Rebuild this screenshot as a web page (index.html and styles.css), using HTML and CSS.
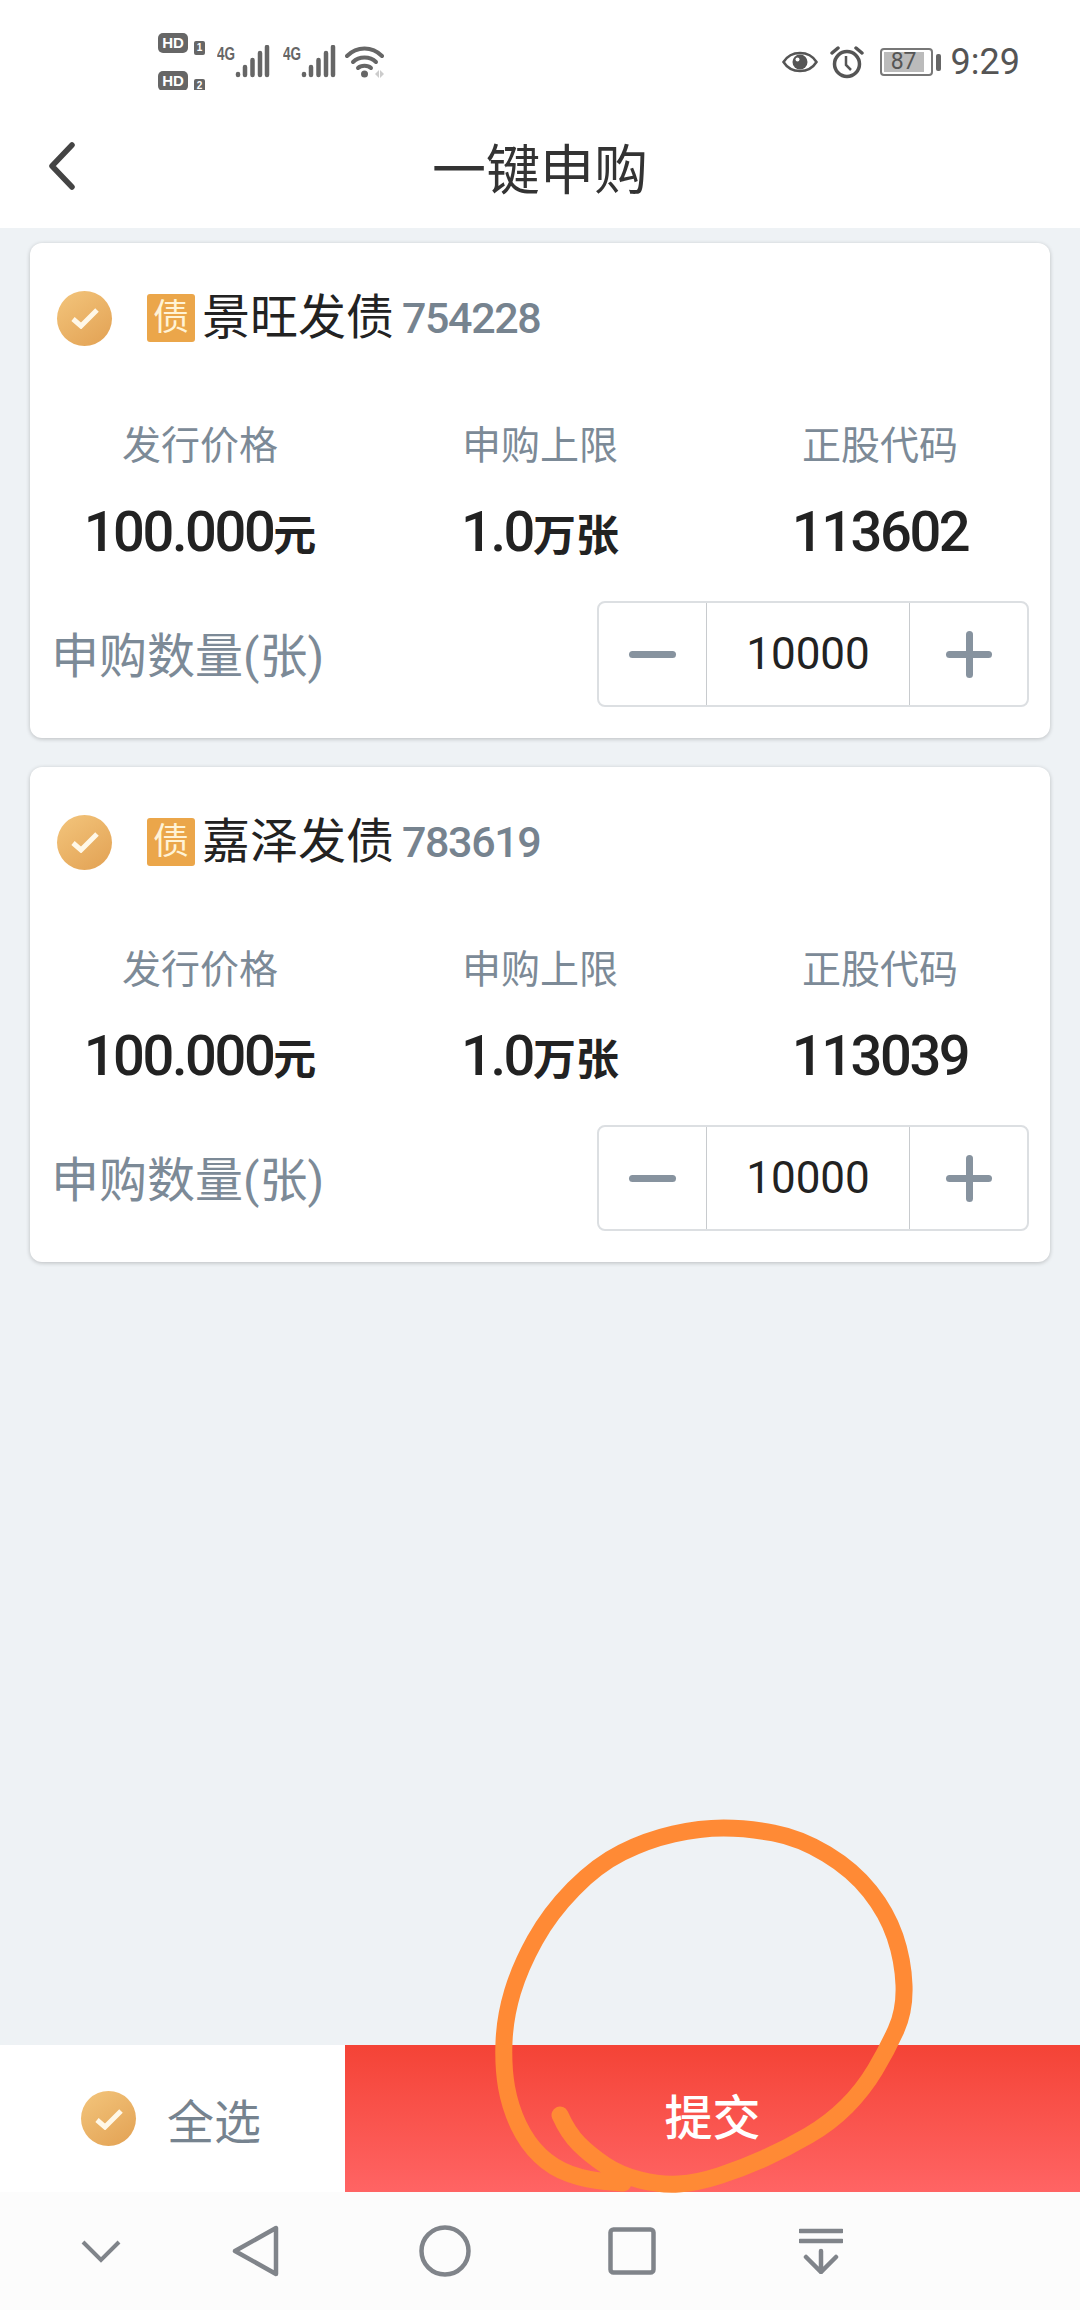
FILE: index.html
```html
<!DOCTYPE html>
<html lang="zh">
<head>
    <meta charset="utf-8">
    <title>一键申购</title>
    <link rel="stylesheet" href="styles.css">
</head>
<body>
    <div class="page">
        <div class="status-bar">
            <div class="status-left">
                <div class="hd-block">
                    <div class="hd-row"><span class="hd-box">HD</span><span class="hd-num">1</span></div>
                    <div class="hd-row"><span class="hd-box">HD</span><span class="hd-num">2</span></div>
                </div>
                <svg class="icon-signal" width="54" height="34" viewBox="0 0 54 34">
                    <text x="0" y="15" class="net-text" textLength="18" lengthAdjust="spacingAndGlyphs">4G</text>
                    <g stroke="#666" stroke-width="4.500" stroke-linecap="round">
                        <path d="M21 29v1M28 22v8M35.500 15v15M43 8v22M50 2v28"/>
                    </g>
                </svg>
                <svg class="icon-signal" width="54" height="34" viewBox="0 0 54 34">
                    <text x="0" y="15" class="net-text" textLength="18" lengthAdjust="spacingAndGlyphs">4G</text>
                    <g stroke="#666" stroke-width="4.500" stroke-linecap="round">
                        <path d="M21 29v1M28 22v8M35.500 15v15M43 8v22M50 2v28"/>
                    </g>
                </svg>
                <svg class="icon-wifi" width="40" height="33" viewBox="0 0 40 33">
                    <g fill="none" stroke="#666" stroke-width="4" stroke-linecap="round">
                        <path d="M2 10C12 0 27 0 37 10"/>
                        <path d="M8 16C14 10 25 10 31 16"/>
                        <path d="M13 22C16 19 23 19 26 22"/>
                    </g>
                    <circle cx="19.500" cy="28" r="3.500" fill="#666"/>
                    <path d="M30 28l4-4v8zM35 24l4 4-4 4z" fill="#ccc"/>
                </svg>
            </div>
            <div class="status-right">
                <svg width="36" height="26" viewBox="0 0 36 26">
                    <path d="M1.500 13C9 1 27 1 34.500 13C27 25 9 25 1.500 13Z" fill="none" stroke="#555" stroke-width="2.500"/>
                    <circle cx="18" cy="13" r="7.500" fill="#555"/>
                    <circle cx="15.500" cy="10.500" r="2" fill="#fff"/>
                </svg>
                <svg width="34" height="33" viewBox="0 0 34 33">
                    <circle cx="17" cy="18" r="12.500" fill="none" stroke="#555" stroke-width="3.500"/>
                    <path d="M16 10v9l5 5" fill="none" stroke="#555" stroke-width="2.500"/>
                    <path d="M2 7l6-5M32 7l-6-5" stroke="#555" stroke-width="3.500" stroke-linecap="round"/>
                </svg>
                <div class="battery">
                    <div class="battery-body"><span class="battery-fill">87</span></div>
                    <div class="battery-nub"></div>
                </div>
                <span class="clock">9:29</span>
            </div>
        </div>

        <div class="nav">
            <svg class="nav-back" width="30" height="48" viewBox="0 0 30 48">
                <path d="M25 3L5 24L25 45" fill="none" stroke="#444" stroke-width="5.500" stroke-linecap="round" stroke-linejoin="round"/>
            </svg>
            <h1 class="nav-title">一键申购</h1>
        </div>

        <div class="content">
            <div class="card">
                <div class="card-head">
                    <span class="check">
                        <svg width="28" height="22" viewBox="0 0 28 22"><path d="M2 12l8 7L26 3" fill="none" stroke="#fff8e8" stroke-width="5"/></svg>
                    </span>
                    <span class="tag">债</span>
                    <span class="bond-name">景旺发债</span>
                    <span class="bond-code">754228</span>
                </div>
                <div class="stats">
                    <div class="stat">
                        <div class="stat-label">发行价格</div>
                        <div class="stat-value">100.000<small>元</small></div>
                    </div>
                    <div class="stat">
                        <div class="stat-label">申购上限</div>
                        <div class="stat-value">1.0<small>万张</small></div>
                    </div>
                    <div class="stat">
                        <div class="stat-label">正股代码</div>
                        <div class="stat-value">113602</div>
                    </div>
                </div>
                <div class="qty-row">
                    <span class="qty-label">申购数量(张)</span>
                    <div class="stepper">
                        <div class="step-btn"><span class="minus"></span></div>
                        <div class="step-value">10000</div>
                        <div class="step-btn"><span class="plus"></span></div>
                    </div>
                </div>
            </div>

            <div class="card">
                <div class="card-head">
                    <span class="check">
                        <svg width="28" height="22" viewBox="0 0 28 22"><path d="M2 12l8 7L26 3" fill="none" stroke="#fff8e8" stroke-width="5"/></svg>
                    </span>
                    <span class="tag">债</span>
                    <span class="bond-name">嘉泽发债</span>
                    <span class="bond-code">783619</span>
                </div>
                <div class="stats">
                    <div class="stat">
                        <div class="stat-label">发行价格</div>
                        <div class="stat-value">100.000<small>元</small></div>
                    </div>
                    <div class="stat">
                        <div class="stat-label">申购上限</div>
                        <div class="stat-value">1.0<small>万张</small></div>
                    </div>
                    <div class="stat">
                        <div class="stat-label">正股代码</div>
                        <div class="stat-value">113039</div>
                    </div>
                </div>
                <div class="qty-row">
                    <span class="qty-label">申购数量(张)</span>
                    <div class="stepper">
                        <div class="step-btn"><span class="minus"></span></div>
                        <div class="step-value">10000</div>
                        <div class="step-btn"><span class="plus"></span></div>
                    </div>
                </div>
            </div>
        </div>

        <div class="bottom-bar">
            <div class="select-all">
                <span class="check">
                    <svg width="28" height="22" viewBox="0 0 28 22"><path d="M2 12l8 7L26 3" fill="none" stroke="#fff8e8" stroke-width="5"/></svg>
                </span>
                <span class="select-label">全选</span>
            </div>
            <div class="submit">提交</div>
        </div>

        <div class="sys-nav">
            <svg width="40" height="24" viewBox="0 0 40 24">
                <path d="M2 3L20 21L38 3" fill="none" stroke="#80848a" stroke-width="4"/>
            </svg>
            <svg width="48" height="52" viewBox="0 0 48 52">
                <path d="M44 3V49L3 26Z" fill="none" stroke="#80848a" stroke-width="4.500" stroke-linejoin="round"/>
            </svg>
            <svg width="52" height="52" viewBox="0 0 52 52">
                <circle cx="26" cy="26" r="23.500" fill="none" stroke="#80848a" stroke-width="4.500"/>
            </svg>
            <svg width="48" height="48" viewBox="0 0 48 48">
                <rect x="2.500" y="2.500" width="43" height="43" rx="3" fill="none" stroke="#80848a" stroke-width="4.500"/>
            </svg>
            <svg width="44" height="46" viewBox="0 0 44 46">
                <path d="M1 3H43M1 13H43" stroke="#80848a" stroke-width="4.500" stroke-linecap="round"/>
                <path d="M22 23V44M7 29L22 44L37 29" fill="none" stroke="#80848a" stroke-width="4.500" stroke-linecap="round"/>
            </svg>
        </div>

        <svg class="scribble" width="1080" height="2310" viewBox="0 0 1080 2310">
            <path d="M560 2115Q568 2133 579 2144Q590 2155 605 2165Q620 2175 640 2180Q660 2185 678.500 2184Q697 2183 720 2175.500Q743 2168 765 2158Q787 2148 808.500 2135.500Q830 2123 846.500 2106.500Q863 2090 875 2070Q887 2050 896 2030Q905 2010 904 1985Q903 1960 895 1936.500Q887 1913 870 1891.500Q853 1870 826.500 1854Q800 1838 773.500 1833Q747 1828 723.500 1828Q700 1828 673.500 1834Q647 1840 622 1852.500Q597 1865 573.500 1889Q550 1913 535 1940Q520 1967 512.500 1992Q505 2017 504 2042Q503 2067 506.500 2087Q510 2107 518.500 2125Q527 2143 540 2155.500Q553 2168 570 2174Q587 2180 605 2181.500L623 2183" fill="none" stroke="#ff8a35" stroke-width="17" stroke-linecap="round" stroke-linejoin="round"/>
        </svg>
    </div>
</body>
</html>
```

FILE: styles.css
```css
* {
    box-sizing: border-box;
}

body {
    margin: 0;
    font-family: Roboto, "Noto Sans CJK SC", sans-serif;
    background: #eef2f5;
}

.page {
    position: relative;
    width: 1080px;
    height: 2310px;
    display: flex;
    flex-direction: column;
    overflow: hidden;
}

/* status bar */
.status-bar {
    height: 90px;
    background: white;
    display: flex;
    justify-content: space-between;
    padding: 33px 60px 0 158px;
}

.status-left {
    display: flex;
    align-items: flex-start;
}

.hd-block {
    width: 48px;
    display: flex;
    flex-direction: column;
    gap: 16px;
}

.hd-row {
    display: flex;
    gap: 6px;
    font-family: "Liberation Sans", sans-serif;
    font-weight: 700;
    color: white;
    text-align: center;
}

.hd-box {
    width: 30px;
    height: 20px;
    background: #666;
    border-radius: 5px;
    font-size: 15px;
    line-height: 20px;
}

.hd-num {
    width: 11px;
    height: 14px;
    margin-top: 8px;
    background: #666;
    border-radius: 2px;
    font-size: 10px;
    line-height: 14px;
}

.icon-signal {
    margin-top: 12px;
    margin-left: 11px;
}

.icon-signal + .icon-signal {
    margin-left: 12px;
}

.icon-wifi {
    margin-top: 13px;
    margin-left: 8px;
}

.net-text {
    font-family: "Liberation Sans", sans-serif;
    font-size: 19px;
    font-weight: 700;
    fill: #666;
}

.status-right {
    display: flex;
    align-items: center;
    height: 58px;
    gap: 12px;
}

.battery {
    display: flex;
    align-items: center;
    gap: 3px;
    margin-left: 4px;
}

.battery-body {
    width: 53px;
    height: 28px;
    border: 2px solid #777;
    border-radius: 4px;
    padding: 2px 7px 2px 2px;
    display: flex;
}

.battery-fill {
    flex: 1;
    background: #bbb;
    color: #555;
    font-size: 23px;
    line-height: 20px;
    text-align: center;
}

.battery-nub {
    width: 5px;
    height: 17px;
    background: #666;
    border-radius: 2px;
}

.clock {
    margin-left: -2px;
    font-size: 36px;
    color: #555;
}

/* title bar */
.nav {
    position: relative;
    height: 138px;
    background: white;
    display: flex;
    align-items: center;
    justify-content: center;
}

.nav-back {
    position: absolute;
    left: 47px;
    top: 52px;
}

.nav-title {
    margin: 14px 0 0;
    font-size: 54px;
    font-weight: 400;
    color: #333;
}

/* bond cards */
.content {
    flex: 1;
    padding: 15px 30px 0;
    display: flex;
    flex-direction: column;
    gap: 29px;
}

.card {
    background: white;
    border-radius: 12px;
    box-shadow: 0 1px 4px rgba(0, 0, 0, 0.22);
    height: 495px;
}

.card-head {
    height: 150px;
    display: flex;
    align-items: center;
    padding-left: 27px;
}

.check {
    width: 55px;
    height: 55px;
    border-radius: 50%;
    background: linear-gradient(145deg, #f3c57c, #e2a153);
    display: flex;
    align-items: center;
    justify-content: center;
    flex-shrink: 0;
}

.tag {
    width: 48px;
    height: 48px;
    margin-left: 35px;
    background: #eba64a;
    color: #fff3d6;
    border-radius: 3px;
    font-size: 36px;
    line-height: 48px;
    text-align: center;
}

.bond-name {
    margin-left: 7px;
    font-size: 48px;
    line-height: 1;
    color: #222;
}

.bond-code {
    margin-left: 8px;
    font-size: 43px;
    font-weight: 500;
    letter-spacing: -1.400px;
    color: #76838f;
}

.stats {
    display: grid;
    grid-template-columns: repeat(3, 1fr);
    margin-top: 28px;
    text-align: center;
}

.stat-label {
    font-size: 39px;
    line-height: 50px;
    color: #7c8a97;
}

.stat-value {
    margin-top: 26px;
    font-size: 56px;
    font-weight: 500;
    line-height: 70px;
    letter-spacing: -2.400px;
    color: #222;
}

.stat-value small {
    font-size: 43px;
    font-weight: 700;
    letter-spacing: 0;
}

.qty-row {
    margin-top: 30px;
    padding: 0 21px 0 21px;
    display: flex;
    justify-content: space-between;
    align-items: center;
}

.qty-label {
    padding-bottom: 5px;
    font-size: 48px;
    color: #7c8a97;
}

.stepper {
    width: 432px;
    height: 106px;
    border: 2px solid #dcdfe2;
    border-radius: 8px;
    display: flex;
}

.step-btn {
    flex: 1;
    display: flex;
    align-items: center;
    justify-content: center;
}

.step-btn:first-child {
    flex: none;
    width: 107px;
}

.step-value {
    width: 204px;
    border-left: 1px solid #c8cbce;
    border-right: 1px solid #c8cbce;
    font-size: 44px;
    line-height: 102px;
    text-align: center;
    color: #222;
}

.minus {
    width: 47px;
    height: 7px;
    border-radius: 4px;
    background: #87939f;
}

.plus {
    position: relative;
    width: 46px;
    height: 7px;
    border-radius: 4px;
    background: #87939f;
}

.plus::after {
    content: "";
    position: absolute;
    left: 20px;
    top: -20px;
    width: 7px;
    height: 47px;
    border-radius: 4px;
    background: #87939f;
}

/* bottom actions */
.bottom-bar {
    height: 147px;
    display: flex;
}

.select-all {
    width: 345px;
    background: white;
    display: flex;
    align-items: center;
    padding-left: 81px;
}

.select-label {
    margin-left: 31px;
    font-size: 47px;
    color: #76838f;
}

.submit {
    flex: 1;
    background: linear-gradient(#f44336, #ff6464);
    color: white;
    font-size: 48px;
    font-weight: 500;
    line-height: 147px;
    text-align: center;
}

.sys-nav {
    height: 118px;
    background: #fcfcfc;
    display: grid;
    grid-template-columns: 202px 108px 270px 104px 274px;
    align-items: center;
    justify-items: center;
}

.scribble {
    position: absolute;
    left: 0;
    top: 0;
    pointer-events: none;
}
```
